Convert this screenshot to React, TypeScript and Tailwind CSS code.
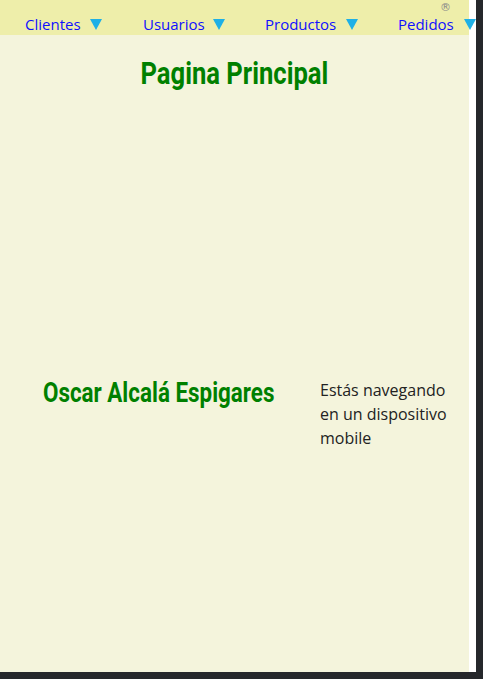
import React from "react";

const Tri = () => (
  <svg width="12" height="11" viewBox="0 0 12 11" className="block">
    <polygon points="0,0 12,0 6,11" fill="#1eb0e6" />
  </svg>
);

const items: { t: string; w: string; mr: string }[] = [
  { t: "Clientes", w: "w-[65px]", mr: "mr-[41px]" },
  { t: "Usuarios", w: "w-[70px]", mr: "mr-[40px]" },
  { t: "Productos", w: "w-[81px]", mr: "mr-[40px]" },
  { t: "Pedidos", w: "w-[66px]", mr: "" },
];

export default function App() {
  return (
    <div className="w-[483px] h-[679px] bg-[#25272b] overflow-hidden">
      <div className="flex h-[672px]">
        <div className="w-[469px] h-full bg-[#f4f4dc] relative">
          <nav className="h-[35px] bg-[#eeeeaa] flex items-end pl-[25px] pb-[2px] relative" style={{ fontFamily: '"Open Sans", "Noto Sans", sans-serif' }}>
            {items.map((it) => (
              <div key={it.t} className={"flex items-center shrink-0 " + it.mr}>
                <span className={"text-[15px] leading-[18px] text-[#1010ff] " + it.w}>{it.t}</span>
                <Tri />
              </div>
            ))}
            <span className="absolute left-[440px] top-[3px] text-[11px] leading-[10px] text-[#888]" style={{ fontFamily: '"DejaVu Sans", sans-serif' }}>®</span>
          </nav>
          <div className="flex justify-center mt-[18px]">
            <h1 className="text-[32px] leading-[40px] font-bold text-[#008000] scale-x-[0.8]" style={{ fontFamily: 'Roboto, sans-serif' }}>Pagina Principal</h1>
          </div>
          <div className="flex mt-[284px]">
            <div className="w-[318px] flex justify-center">
              <h2 className="text-[28px] leading-[32px] font-bold text-[#008000] scale-x-[0.8]" style={{ fontFamily: 'Roboto, sans-serif' }}>Oscar Alcalá Espigares</h2>
            </div>
            <p className="w-[130px] ml-[2px] mt-[1px] text-[16px] leading-[24px] text-[#222]" style={{ fontFamily: '"Open Sans", "Noto Sans", sans-serif' }}>Estás navegando en un dispositivo mobile</p>
          </div>
        </div>
        <div className="w-[7px] h-full bg-white" />
      </div>
    </div>
  );
}
